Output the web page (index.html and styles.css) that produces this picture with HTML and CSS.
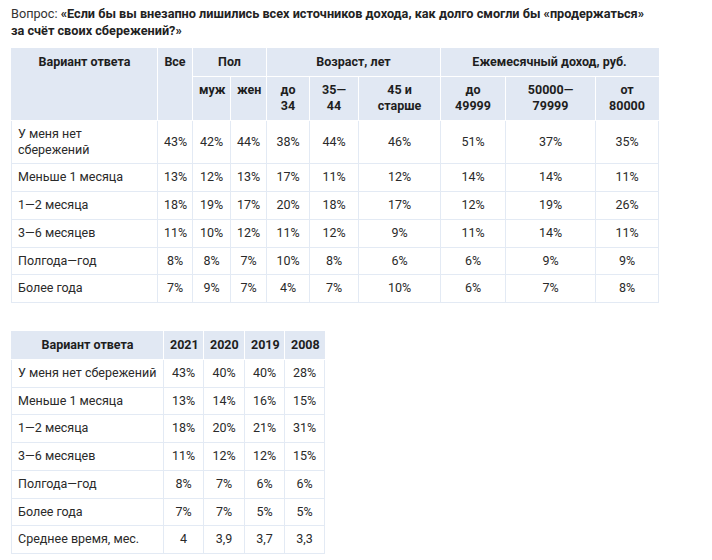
FILE: index.html
```html
<!DOCTYPE html>
<html lang="ru">
<head>
<meta charset="utf-8">
<link rel="stylesheet" href="styles.css">
</head>
<body>
<div class="content">
<p class="question">Вопрос: <b>«Если бы вы внезапно лишились всех источников дохода, как долго смогли бы «продержаться» за счёт своих сбережений?»</b></p>
<table class="data t1">
  <colgroup>
    <col style="width:146px"><col style="width:35px"><col style="width:38px"><col style="width:36px"><col style="width:43px"><col style="width:49px"><col style="width:82px"><col style="width:65px"><col style="width:90px"><col style="width:63px">
  </colgroup>
  <thead>
    <tr>
      <th rowspan="2">Вариант ответа</th>
      <th rowspan="2">Все</th>
      <th colspan="2">Пол</th>
      <th colspan="3">Возраст, лет</th>
      <th colspan="3">Ежемесячный доход, руб.</th>
    </tr>
    <tr>
      <th>муж</th>
      <th>жен</th>
      <th>до<br>34</th>
      <th>35—<br>44</th>
      <th>45 и<br>старше</th>
      <th>до<br>49999</th>
      <th>50000—<br>79999</th>
      <th>от<br>80000</th>
    </tr>
  </thead>
  <tbody>
    <tr><td>У меня нет<br>сбережений</td><td>43%</td><td>42%</td><td>44%</td><td>38%</td><td>44%</td><td>46%</td><td>51%</td><td>37%</td><td>35%</td></tr>
    <tr><td>Меньше 1 месяца</td><td>13%</td><td>12%</td><td>13%</td><td>17%</td><td>11%</td><td>12%</td><td>14%</td><td>14%</td><td>11%</td></tr>
    <tr><td>1—2 месяца</td><td>18%</td><td>19%</td><td>17%</td><td>20%</td><td>18%</td><td>17%</td><td>12%</td><td>19%</td><td>26%</td></tr>
    <tr><td>3—6 месяцев</td><td>11%</td><td>10%</td><td>12%</td><td>11%</td><td>12%</td><td>9%</td><td>11%</td><td>14%</td><td>11%</td></tr>
    <tr><td>Полгода—год</td><td>8%</td><td>8%</td><td>7%</td><td>10%</td><td>8%</td><td>6%</td><td>6%</td><td>9%</td><td>9%</td></tr>
    <tr><td>Более года</td><td>7%</td><td>9%</td><td>7%</td><td>4%</td><td>7%</td><td>10%</td><td>6%</td><td>7%</td><td>8%</td></tr>
  </tbody>
</table>
<table class="data t2">
  <colgroup>
    <col style="width:152px"><col style="width:40px"><col style="width:41px"><col style="width:40px"><col style="width:40px">
  </colgroup>
  <thead>
    <tr><th>Вариант ответа</th><th>2021</th><th>2020</th><th>2019</th><th>2008</th></tr>
  </thead>
  <tbody>
    <tr><td>У меня нет сбережений</td><td>43%</td><td>40%</td><td>40%</td><td>28%</td></tr>
    <tr><td>Меньше 1 месяца</td><td>13%</td><td>14%</td><td>16%</td><td>15%</td></tr>
    <tr><td>1—2 месяца</td><td>18%</td><td>20%</td><td>21%</td><td>31%</td></tr>
    <tr><td>3—6 месяцев</td><td>11%</td><td>12%</td><td>12%</td><td>15%</td></tr>
    <tr><td>Полгода—год</td><td>8%</td><td>7%</td><td>6%</td><td>6%</td></tr>
    <tr><td>Более года</td><td>7%</td><td>7%</td><td>5%</td><td>5%</td></tr>
    <tr><td>Среднее время, мес.</td><td>4</td><td>3,9</td><td>3,7</td><td>3,3</td></tr>
  </tbody>
</table>
</div>
</body>
</html>
```

FILE: styles.css
```css
html, body {
  background: #ffffff;
}
body {
  margin: 0;
  font-family: Roboto, "Liberation Sans", sans-serif;
  font-size: 12.5px;
  color: #333333;
}
.content {
  width: 647px;
  padding: 0 11px;
}
.question {
  max-width: 640px;
  margin: 5px 0 9px;
  font-size: 12.7px;
  line-height: 17px;
  color: #333333;
}
.question b {
  color: #222222;
  font-weight: 700;
}
.data {
  border-collapse: collapse;
  table-layout: fixed;
  line-height: 16px;
}
.t1 {
  width: 647px;
}
.t2 {
  width: 313px;
  margin-top: 28px;
}
.t2 td {
  white-space: nowrap;
}
.data th {
  background: #e1e8f3;
  border: 1px solid #ffffff;
  color: #1e1e1e;
  font-weight: 700;
  text-align: center;
  vertical-align: top;
  padding: 5px 6px 5.75px;
}
.data td {
  border: 1px solid #e3eaf4;
  text-align: center;
  vertical-align: middle;
  padding: 5px 6px 5.75px;
  color: #2a2a2a;
}
.data td:first-child {
  text-align: left;
}
.data thead tr:first-child th {
  border-top-color: #e1e8f3;
}
.data thead th:first-child {
  border-left-color: #e1e8f3;
}
.data thead th:last-child {
  border-right-color: #e1e8f3;
}
```
